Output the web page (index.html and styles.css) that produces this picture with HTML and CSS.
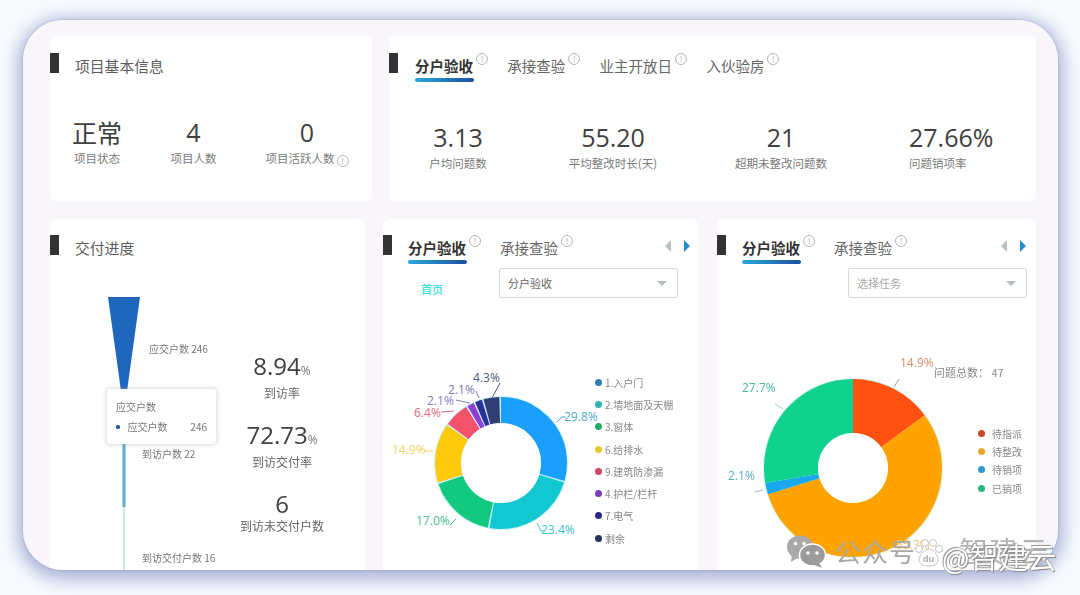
FILE: index.html
```html
<!DOCTYPE html>
<html lang="zh">
<head>
<meta charset="utf-8">
<title>项目看板</title>
<link rel="stylesheet" href="styles.css">
</head>
<body>
<main class="shell">
  <section class="row row-top">
    <article class="card">
      <header class="head"><i class="mark"></i><h2 class="title">项目基本信息</h2></header>
      <div class="info-stats">
        <div class="stat"><b class="num num-cn">正常</b><span class="lbl">项目状态</span></div>
        <div class="stat"><b class="num">4</b><span class="lbl">项目人数</span></div>
        <div class="stat"><b class="num">0</b><span class="lbl">项目活跃人数<i class="tip tip-inline">!</i></span></div>
      </div>
    </article>
    <article class="card">
      <header class="head"><i class="mark"></i>
        <nav class="tabs tabs-top">
          <span class="tab on">分户验收<i class="tip">!</i></span>
          <span class="tab">承接查验<i class="tip">!</i></span>
          <span class="tab">业主开放日<i class="tip">!</i></span>
          <span class="tab">入伙验房<i class="tip">!</i></span>
        </nav>
      </header>
      <div class="acc-stats">
        <div class="stat"><b class="num">3.13</b><span class="lbl">户均问题数</span></div>
        <div class="stat"><b class="num">55.20</b><span class="lbl">平均整改时长(天)</span></div>
        <div class="stat"><b class="num">21</b><span class="lbl">超期未整改问题数</span></div>
        <div class="stat stat-left"><b class="num">27.66%</b><span class="lbl">问题销项率</span></div>
      </div>
    </article>
  </section>

  <section class="row row-bottom">
    <article class="card">
      <header class="head"><i class="mark"></i><h2 class="title">交付进度</h2></header>
      <div class="progress">
        <div class="funnel">
          <svg class="funnel-svg" viewBox="50 290 170 280" width="170" height="280">
            <polygon points="108,297 140,297 124,413" fill="#1f66bd"/>
            <rect x="122.500" y="440" width="3" height="67" fill="#5aaecb"/>
            <rect x="123" y="507" width="2" height="63" fill="#c8e7f1"/>
            <text x="149" y="353" class="f-label">应交户数 246</text>
            <text x="142" y="458" class="f-label">到访户数 22</text>
            <text x="142" y="562" class="f-label">到访交付户数 16</text>
          </svg>
          <div class="tooltip">
            <p class="tt-title">应交户数</p>
            <p class="tt-row"><i class="tt-dot"></i><span>应交户数</span><span class="tt-val">246</span></p>
          </div>
        </div>
        <div class="rates">
          <div class="rate"><b class="rate-num">8.94<small>%</small></b><span>到访率</span></div>
          <div class="rate"><b class="rate-num">72.73<small>%</small></b><span>到访交付率</span></div>
          <div class="rate"><b class="rate-num">6</b><span>到访未交付户数</span></div>
        </div>
      </div>
    </article>

    <article class="card">
      <header class="head head-chart"><i class="mark"></i>
        <nav class="tabs tabs-chart">
          <span class="tab on">分户验收<i class="tip">!</i></span>
          <span class="tab">承接查验<i class="tip">!</i></span>
        </nav>
        <div class="pager"><i class="arr arr-l"></i><i class="arr arr-r"></i></div>
      </header>
      <div class="filter">
        <span class="hint">首页</span>
        <div class="select select-a"><span>分户验收</span><i class="caret"></i></div>
      </div>
      <div class="chart-row">
        <svg class="chart" viewBox="383 360 210 210" width="210" height="210">
          <circle cx="501" cy="462" r="67" fill="#c9f4fb"/>
          <g fill="none" stroke-width="26" transform="rotate(-90 501 462)">
            <circle cx="501" cy="462" r="53" pathLength="100" stroke="#1a9ffc" stroke-dasharray="29.4 70.6" stroke-dashoffset="0"/>
            <circle cx="501" cy="462" r="53" pathLength="100" stroke="#12c7cf" stroke-dasharray="23 77" stroke-dashoffset="-29.8"/>
            <circle cx="501" cy="462" r="53" pathLength="100" stroke="#13c97f" stroke-dasharray="16.6 83.4" stroke-dashoffset="-53.2"/>
            <circle cx="501" cy="462" r="53" pathLength="100" stroke="#ffc90e" stroke-dasharray="14.5 85.5" stroke-dashoffset="-70.2"/>
            <circle cx="501" cy="462" r="53" pathLength="100" stroke="#f4516a" stroke-dasharray="6 94" stroke-dashoffset="-85.1"/>
            <circle cx="501" cy="462" r="53" pathLength="100" stroke="#8c3fd6" stroke-dasharray="1.7 98.3" stroke-dashoffset="-91.5"/>
            <circle cx="501" cy="462" r="53" pathLength="100" stroke="#2b2f9a" stroke-dasharray="1.7 98.3" stroke-dashoffset="-93.6"/>
            <circle cx="501" cy="462" r="53" pathLength="100" stroke="#2f3f75" stroke-dasharray="3.9 96.1" stroke-dashoffset="-95.7"/>
          </g>
          <circle cx="501" cy="462" r="40" fill="#fff"/>
          <g fill="none" stroke-width="1">
            <polyline points="557,421 562,416 566,416" stroke="#4fa9d0"/>
            <polyline points="537,522 541,530 545,530" stroke="#3fc3cd"/>
            <polyline points="450,524 456,518" stroke="#4cc092"/>
            <polyline points="424,450 433,450" stroke="#f2d660"/>
            <polyline points="441,411 454,410" stroke="#e06a7c"/>
            <polyline points="456,399 470,402" stroke="#8a7cc8"/>
            <polyline points="476,390 479,397" stroke="#7d78b8"/>
            <polyline points="500,382 492,397" stroke="#4e5a80"/>
          </g>
          <text x="564" y="420" class="pct" fill="#4fa9d0">29.8%</text>
          <text x="541" y="533" class="pct" fill="#3fc3cd">23.4%</text>
          <text x="416" y="524" class="pct" fill="#4cc092">17.0%</text>
          <text x="392" y="453" class="pct" fill="#f2d660">14.9%</text>
          <text x="414" y="416" class="pct" fill="#e06a7c">6.4%</text>
          <text x="427" y="404" class="pct" fill="#8a7cc8">2.1%</text>
          <text x="448" y="393" class="pct" fill="#7d78b8">2.1%</text>
          <text x="473" y="381" class="pct" fill="#4e5a80">4.3%</text>
        </svg>
        <ul class="legend legend-a">
          <li><i class="dot c-blue"></i>1.入户门</li>
          <li><i class="dot c-teal"></i>2.墙地面及天棚</li>
          <li><i class="dot c-green"></i>3.窗体</li>
          <li><i class="dot c-yellow"></i>6.给排水</li>
          <li><i class="dot c-red"></i>9.建筑防渗漏</li>
          <li><i class="dot c-purple"></i>4.护栏/栏杆</li>
          <li><i class="dot c-indigo"></i>7.电气</li>
          <li><i class="dot c-navy"></i>剩余</li>
        </ul>
      </div>
    </article>

    <article class="card">
      <header class="head head-chart"><i class="mark"></i>
        <nav class="tabs tabs-chart">
          <span class="tab on">分户验收<i class="tip">!</i></span>
          <span class="tab">承接查验<i class="tip">!</i></span>
        </nav>
        <div class="pager pager-b"><i class="arr arr-l"></i><i class="arr arr-r"></i></div>
      </header>
      <div class="filter filter-end">
        <div class="select select-b"><span>选择任务</span><i class="caret"></i></div>
      </div>
      <div class="chart-row">
        <svg class="chart" viewBox="717 360 260 210" width="260" height="210">
          <circle cx="853" cy="467" r="90" fill="#d5f7e8"/>
          <g fill="none" stroke-width="54" transform="rotate(-90 853 467)">
            <circle cx="853" cy="467" r="62" pathLength="100" stroke="#ff5212" stroke-dasharray="14.9 85.1"/>
            <circle cx="853" cy="467" r="62" pathLength="100" stroke="#ffa300" stroke-dasharray="55.3 44.7" stroke-dashoffset="-14.9"/>
            <circle cx="853" cy="467" r="62" pathLength="100" stroke="#19a7f0" stroke-dasharray="2.1 97.9" stroke-dashoffset="-70.2"/>
            <circle cx="853" cy="467" r="62" pathLength="100" stroke="#0fd28f" stroke-dasharray="27.7 72.3" stroke-dashoffset="-72.3"/>
          </g>
          <circle cx="853" cy="467" r="35" fill="#fff"/>
          <g fill="none" stroke-width="1">
            <polyline points="894,386 899,378" stroke="#9a9a9a"/>
            <polyline points="775,403 783,408" stroke="#a8c8c0"/>
            <polyline points="755,491 763,489" stroke="#a0b8c0"/>
          </g>
          <text x="900" y="366" class="pct" fill="#d98a6a">14.9%</text>
          <text x="742" y="391" class="pct" fill="#4cb8a0">27.7%</text>
          <text x="728" y="479" class="pct" fill="#5aa9c8">2.1%</text>
          <text x="896" y="548" class="pct" fill="#f5c96b">55.3%</text>
          <text x="934" y="376" class="total">问题总数： 47</text>
        </svg>
        <ul class="legend legend-b">
          <li><i class="dot c-b1"></i>待指派</li>
          <li><i class="dot c-b2"></i>待整改</li>
          <li><i class="dot c-b3"></i>待销项</li>
          <li><i class="dot c-b4"></i>已销项</li>
        </ul>
      </div>
    </article>
  </section>

  <div class="wm-behind">智建云</div>
</main>

<div class="watermark">
  <svg class="wm-chat" viewBox="0 0 40 34" width="40" height="34">
    <ellipse cx="14" cy="13" rx="13" ry="11.500" fill="#a9a9a9"/>
    <polygon points="6,20 5,28 13,23" fill="#a9a9a9"/>
    <ellipse cx="26.500" cy="21" rx="13" ry="11" fill="#9c9c9c" stroke="#fff" stroke-width="1.500"/>
    <polygon points="33,29 36,34 28,31" fill="#9c9c9c"/>
    <circle cx="9.500" cy="9.500" r="1.800" fill="#fff"/><circle cx="18" cy="9.500" r="1.800" fill="#fff"/>
    <circle cx="22" cy="19" r="1.800" fill="#fff"/><circle cx="31" cy="19" r="1.800" fill="#fff"/>
  </svg>
  <span class="wm-gzh">公众号</span>
  <svg class="wm-paw" viewBox="0 0 30 30" width="30" height="30">
    <g fill="#fff" stroke="#c4c4c4" stroke-width="1">
      <circle cx="6" cy="11" r="3.500"/><circle cx="12" cy="5" r="3.500"/><circle cx="20" cy="5" r="3.500"/><circle cx="26" cy="11" r="3.500"/>
      <path d="M16 11c5 0 9 7 9 11s-3 6-9 6-10-2-10-6 5-11 10-11z"/>
    </g>
    <text x="15.500" y="24" class="wm-du">du</text>
  </svg>
  <span class="wm-at">@智建云</span>
</div>
</body>
</html>
```
FILE: styles.css
```css
* { box-sizing: border-box; margin: 0; padding: 0; }
html, body { width: 1080px; height: 595px; overflow: hidden; }
body {
  position: relative;
  background: #f8fbfe;
  font-family: "Noto Sans CJK SC", "Noto Sans", sans-serif;
  color: #444;
  padding: 20px 22px 25px 23px;
}
i { font-style: normal; display: block; }
ul { list-style: none; }

.shell {
  position: relative;
  height: 550px;
  border-radius: 40px;
  background: #f8f6fb;
  padding: 16px 22px 0 27px;
  overflow: hidden;
  filter: blur(.4px);
}
body::before {
  content: "";
  position: absolute; left: 23px; top: 20px; width: 1035px; height: 550px;
  border-radius: 40px;
  box-shadow: 0 0 2px rgba(105, 120, 170, .5), 0 4px 18px 5px rgba(115, 130, 190, .62);
}
.row { display: grid; }
.row-top { grid-template-columns: 322px 647px; gap: 17px; height: 165px; }
.row-bottom { grid-template-columns: 315px 315px 319px; column-gap: 18px; margin-top: 18px; height: 351px; }
.row-bottom .card:last-child { margin-left: 1px; width: 319px; }
.card { position: relative; background: #fff; border-radius: 6px 6px 0 0; min-width: 0; }
.row-top .card { border-radius: 6px; }

.head { display: flex; align-items: flex-start; padding-top: 17px; height: 55px; }
.mark { width: 9px; height: 20px; background: #333; flex: none; }
.title { font-size: 14.800px; font-weight: 400; color: #5c5c5c; margin-left: 16px; line-height: 28px; margin-top: -1px; }
.row-bottom .head { padding-top: 16px; }

.tabs { display: flex; }
.tab { position: relative; display: flex; font-size: 14.500px; color: #666; line-height: 28px; margin-top: -1px; }
.tab .tip { margin: 0 0 0 3px; position: relative; top: 1px; }
.tab.on { color: #333; font-weight: 700; }
.tab.on::after {
  content: "";
  position: absolute; left: 0; bottom: -2px;
  width: 59px; height: 4px; border-radius: 2px;
  background: linear-gradient(90deg, #29a8df, #1d4f9f);
}
.tabs-top { margin-left: 17px; gap: 19.300px; }
.tabs-chart { margin-left: 16px; gap: 19px; }
.tip {
  width: 12px; height: 12px; border: 1px solid #b5b5b5; border-radius: 50%;
  font-size: 8px; line-height: 10px; text-align: center; color: #aaa;
  font-weight: 400; flex: none;
}
.tip-inline { display: inline-block; margin-left: 2px; vertical-align: -1px; }

.stat { display: flex; flex-direction: column; align-items: center; min-width: 0; }
.stat-left { align-items: flex-start; margin-left: 85px; white-space: nowrap; }
.num { font-weight: 400; font-size: 25px; line-height: 30px; color: #404040; font-family: "Open Sans", "Noto Sans CJK SC", sans-serif; white-space: nowrap; }
.num-cn { font-family: "Noto Sans CJK SC", sans-serif; }
.lbl { font-size: 11.500px; line-height: 18px; color: #7a7a7a; white-space: nowrap; margin-top: 2px; }
.info-stats { display: grid; grid-template-columns: 50px 143px 84px; padding-left: 22px; margin-top: 26px; }
.acc-stats { display: grid; grid-template-columns: 60px 250px 86px auto; padding-left: 39px; margin-top: 31px; }

.progress { display: flex; position: relative; height: 296px; }
.funnel { position: relative; width: 170px; flex: none; margin-top: 16px; }
.funnel-svg { display: block; overflow: visible; }
.f-label { font-size: 10px; fill: #777; }
.tooltip {
  position: absolute; left: 57px; top: 99px; width: 109px; height: 55px;
  background: #fff; border-radius: 3px; box-shadow: 0 0 4px 1px rgba(150, 160, 175, .4);
  padding: 9px 9px; font-size: 10px; color: #777;
}
.tt-title { line-height: 18px; }
.tt-row { display: flex; align-items: center; line-height: 18px; margin-top: 2px; }
.tt-dot { width: 3.500px; height: 3.500px; border-radius: 50%; background: #1f4f99; margin-right: 8px; }
.tt-val { margin-left: auto; }
.rates { width: 130px; margin-left: -3px; display: flex; flex-direction: column; margin-top: 80px; gap: 25px; }
.rate { display: flex; flex-direction: column; align-items: center; font-size: 12px; line-height: 20px; color: #666; white-space: nowrap; height: 44px; }
.rate-num { font-family: "Open Sans", sans-serif; font-weight: 400; font-size: 24px; line-height: 24px; color: #404040; }
.rate-num small { font-size: 12px; color: #777; }

.head-chart { position: relative; }
.pager { position: absolute; right: 8px; top: 21px; display: flex; gap: 13px; }
.pager-b { right: 10px; }
.arr { width: 0; height: 0; border-style: solid; border-width: 6px 0 6px 6px; border-color: transparent transparent transparent #1f8fd0; }
.arr-l { border-width: 6px 6px 6px 0; border-color: transparent #b6c2c8 transparent transparent; }

.filter { display: flex; justify-content: flex-end; align-items: center; height: 30px; margin-top: -6px; padding-right: 20px; position: relative; }
.filter-end { padding-right: 9px; margin-top: -6px; }
.hint { position: absolute; left: 38px; top: 14px; font-size: 11px; line-height: 14px; font-weight: 500; color: #40dcd8; }
.select { width: 179px; height: 30px; border: 1px solid #d5dae0; border-radius: 2px; display: flex; align-items: center; justify-content: space-between; padding: 0 10px 0 8px; font-size: 11px; color: #666; background: #fff; }
.select-b { color: #aaa; }
.caret { width: 0; height: 0; border-style: solid; border-width: 5px 5px 0; border-color: #b5bcc2 transparent transparent; }

.chart-row { position: relative; display: flex; margin-top: 63px; }
.chart { display: block; flex: none; overflow: visible; }
.pct { font-size: 12px; font-family: "Open Sans", sans-serif; }
.total { font-size: 11px; fill: #888; }
.legend { font-size: 10px; color: #888; }
.legend li { display: flex; align-items: center; white-space: nowrap; }
.legend-a { margin-left: 1.500px; margin-top: 10px; }
.legend-a li { height: 22.300px; }
.legend-a .dot { margin-right: 3.500px; }
.legend-b { margin-left: .500px; margin-top: 63px; }
.legend-b li { height: 18.300px; }
.legend-b .dot { margin-right: 7.500px; }
.dot { width: 7px; height: 7px; border-radius: 50%; flex: none; }
.c-blue { background: #2a7fb8; } .c-teal { background: #2bb8b0; } .c-green { background: #27a96a; }
.c-yellow { background: #e8c933; } .c-red { background: #cf4660; } .c-purple { background: #7a3db8; }
.c-indigo { background: #2b2a8a; } .c-navy { background: #28305f; }
.c-b1 { background: #c9472b; } .c-b2 { background: #e8a52c; } .c-b3 { background: #2f9ad0; } .c-b4 { background: #2cb87f; }

.wm-behind { position: absolute; left: 936px; top: 511px; font-size: 29px; line-height: 38px; letter-spacing: 1px; color: #b5b5b5; white-space: nowrap; }
.watermark { position: absolute; left: 786px; top: 534px; display: flex; align-items: center; height: 34px; white-space: nowrap; }
.wm-gzh { font-size: 26px; letter-spacing: 1px; color: #a8a8a8; margin-left: 9px; line-height: 34px; }
.wm-paw { margin-left: -3px; margin-top: 4px; flex: none; }
.wm-du { font-size: 9px; font-weight: 700; fill: #aaa; text-anchor: middle; font-family: "Liberation Sans", sans-serif; }
.wm-at { font-size: 29px; line-height: 34px; color: #fff; margin-left: -1px; position: relative; top: 5px; text-shadow: 0 0 1px #777, 1px 1px 1px #888, -1px -1px 1px #999; }
```
